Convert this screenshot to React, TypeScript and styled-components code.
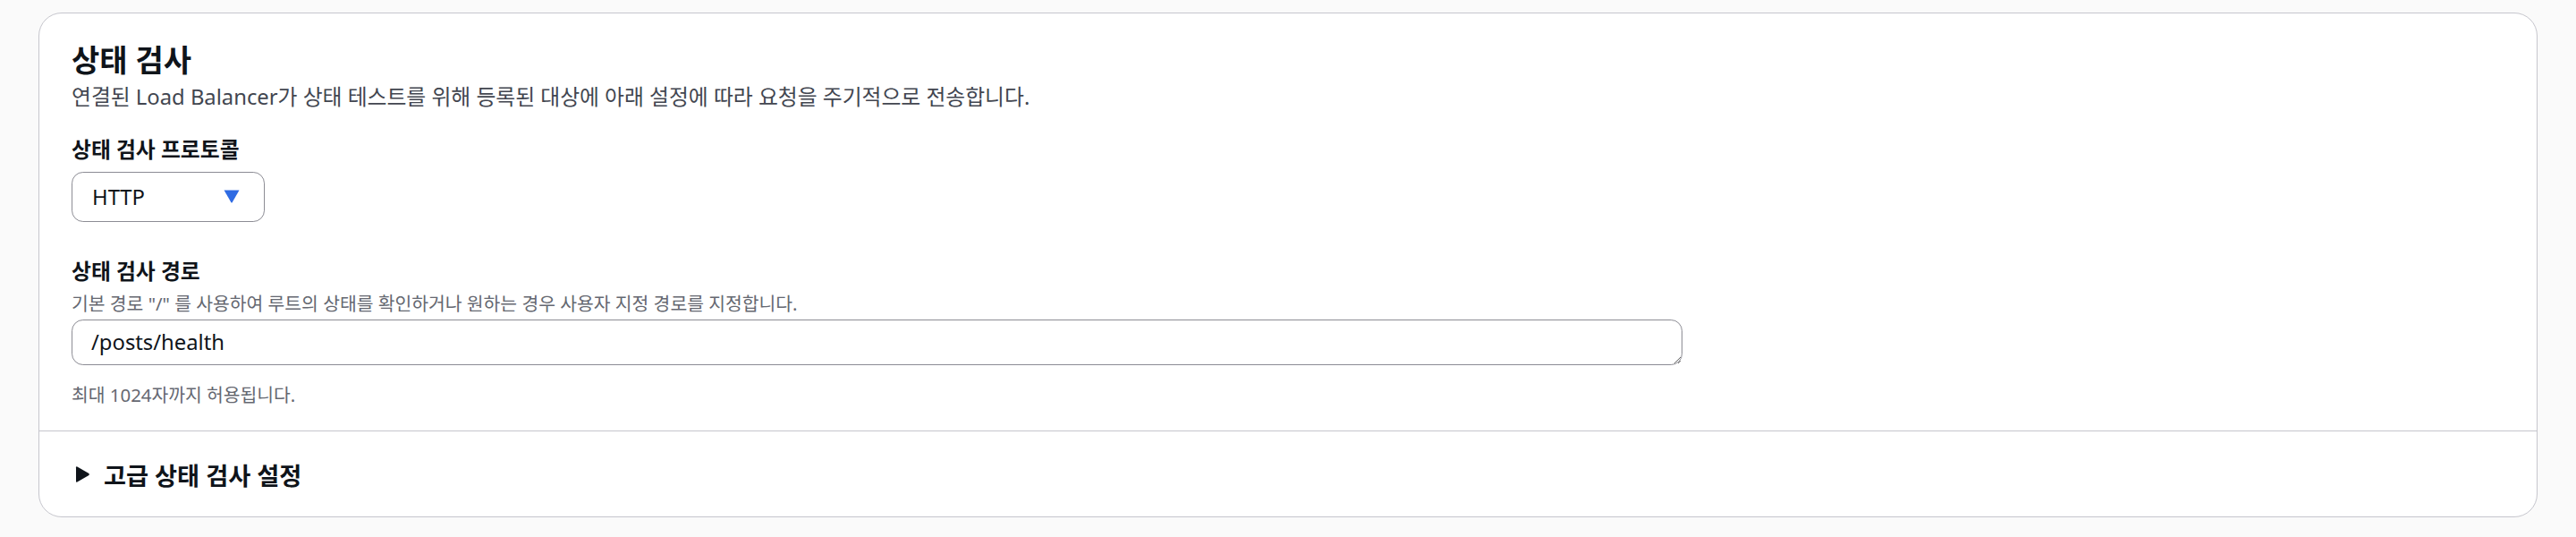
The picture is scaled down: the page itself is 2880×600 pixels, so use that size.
import React from 'react';
import styled, {createGlobalStyle} from "styled-components";

const GlobalStyle = createGlobalStyle`
    body {
        margin: 0;
        background: #fafafa;
        font-family: "Noto Sans", "Noto Sans CJK KR", sans-serif;
        color: #0f141a;
    }
`

export default function App() {
    return (
        <>
            <GlobalStyle/>
            <Page>
                <Card>
                    <CardBody>
                        <Title>상태 검사</Title>
                        <Description>
                            연결된 Load Balancer가 상태 테스트를 위해 등록된 대상에 아래 설정에 따라 요청을 주기적으로 전송합니다.
                        </Description>

                        <Field $gap={25}>
                            <Label>상태 검사 프로토콜</Label>
                            <SelectTrigger type="button">
                                <span>HTTP</span>
                                <svg width="18" height="15" viewBox="0 0 18 15">
                                    <path d="M0.5 0.5 H17.5 L9.6 14.2 Q9 15 8.4 14.2 Z" fill="#2f6be3"/>
                                </svg>
                            </SelectTrigger>
                        </Field>

                        <Field $gap={38}>
                            <Label>상태 검사 경로</Label>
                            <Hint>기본 경로 "/" 를 사용하여 루트의 상태를 확인하거나 원하는 경우 사용자 지정 경로를 지정합니다.</Hint>
                            <PathInput rows={1} defaultValue="/posts/health"/>
                            <Constraint>최대 1024자까지 허용됩니다.</Constraint>
                        </Field>
                    </CardBody>

                    <Expander>
                        <svg width="22" height="20" viewBox="0 0 22 20">
                            <path d="M5 2.2 Q5 0.6 6.4 1.4 L19.4 9 Q20.4 10 19.4 11 L6.4 18.6 Q5 19.4 5 17.8 Z"
                                  fill="#0f141a"/>
                        </svg>
                        <span>고급 상태 검사 설정</span>
                    </Expander>
                </Card>
            </Page>
        </>
    )
}

const Page = styled.main`
    padding: 14px 43px 0 43px;
    height: 600px;
    box-sizing: border-box;
`
const Card = styled.section`
    background: #ffffff;
    border: 1px solid #c6c6cd;
    border-radius: 26px;
    overflow: hidden;
`
const CardBody = styled.div`
    padding: 31.6px 36px 25.4px 36px;
    border-bottom: 1px solid #c6c6cd;
`
const Title = styled.h2`
    margin: 0;
    font-size: 34px;
    line-height: 40.8px;
    font-weight: 700;
    color: #0f141a;
`
const Description = styled.p`
    margin: 3.6px 0 0 0;
    font-size: 23.8px;
    line-height: 34px;
    color: #424650;
`
const Field = styled.div<{ $gap: number }>`
    display: flex;
    flex-direction: column;
    align-items: flex-start;
    margin-top: ${p => p.$gap}px;
`
const Label = styled.label`
    font-size: 23.8px;
    line-height: 34px;
    font-weight: 700;
    color: #0f141a;
`
const SelectTrigger = styled.button`
    margin-top: 8px;
    width: 216px;
    height: 56px;
    box-sizing: border-box;
    display: flex;
    align-items: center;
    justify-content: space-between;
    padding: 0 27px 0 22px;
    background: #ffffff;
    border: 1px solid #8c8c94;
    border-radius: 12.8px;
    font-family: inherit;
    font-size: 23.8px;
    color: #0f141a;
    cursor: pointer;
`
const Hint = styled.span`
    margin-top: 6.4px;
    font-size: 20.4px;
    line-height: 27.2px;
    color: #656871;
`
const PathInput = styled.textarea`
    margin-top: 3.4px;
    width: 1801px;
    height: 51px;
    box-sizing: border-box;
    padding: 7.5px 21px;
    border: 1px solid #8c8c94;
    border-radius: 12.8px;
    font-family: inherit;
    font-size: 23.8px;
    line-height: 34px;
    color: #0f141a;
    overflow: hidden;
    resize: vertical;
    outline: none;
`
const Constraint = styled.span`
    margin-top: 20.4px;
    font-size: 20.4px;
    line-height: 27.2px;
    color: #656871;
`
const Expander = styled.div`
    display: flex;
    align-items: center;
    gap: 14px;
    padding: 33px 36px 28px 36px;
    font-size: 27.2px;
    line-height: 34px;
    font-weight: 700;
    color: #0f141a;

    svg {
        flex-shrink: 0;
        margin-top: -4px;
    }
`
